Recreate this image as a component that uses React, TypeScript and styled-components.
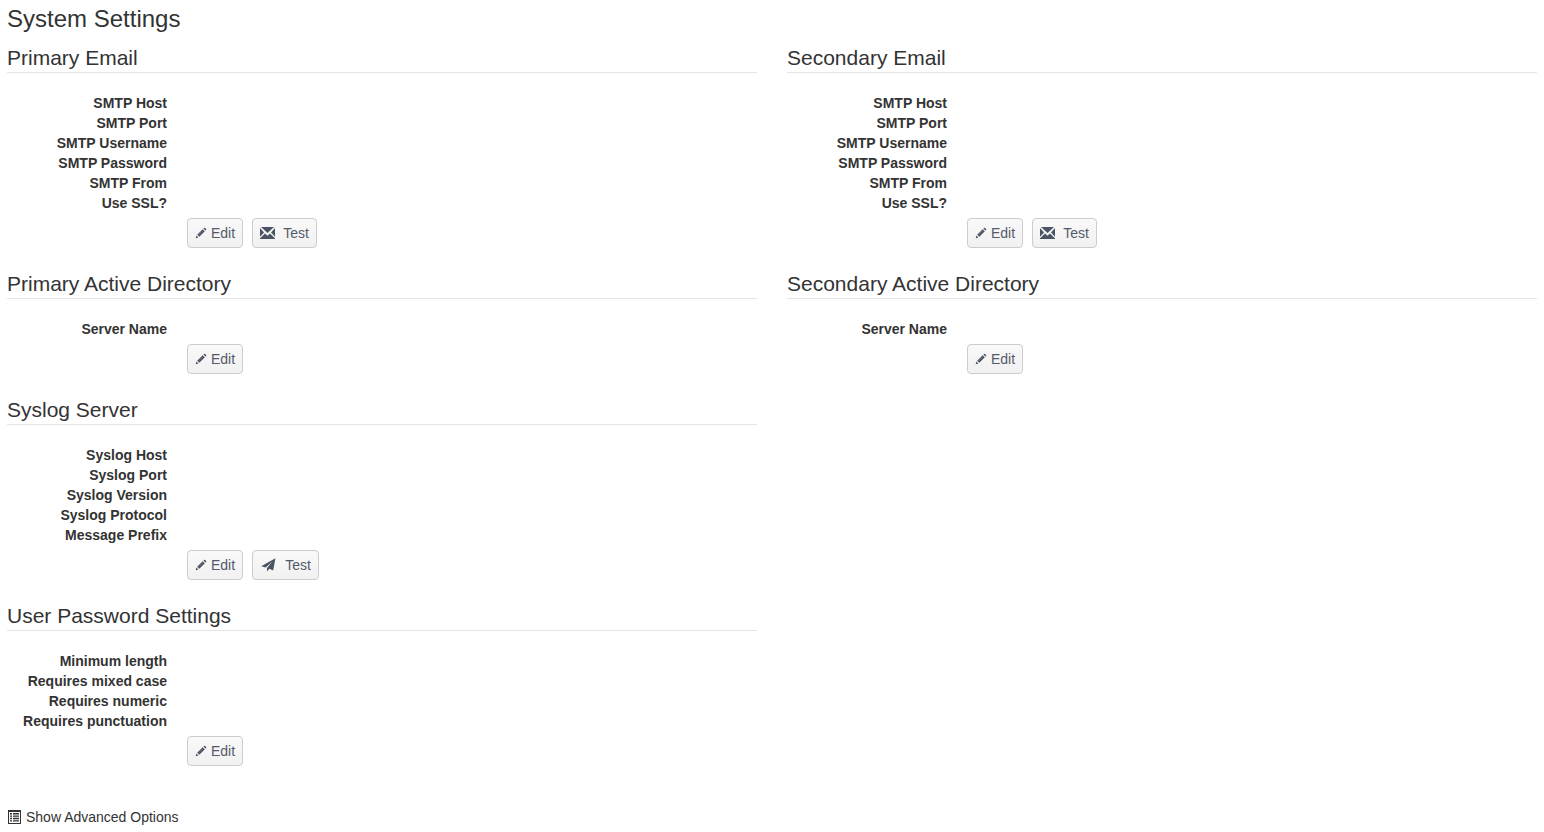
import React from "react";
import styled, { createGlobalStyle } from "styled-components";

const GlobalStyle = createGlobalStyle`
  *, *::before, *::after { box-sizing: border-box; }
  body {
    margin: 0;
    background: #fff;
    color: #333;
    font: 14px/20px "Liberation Sans", Arial, sans-serif;
  }
`;

const Page = styled.main`
  padding: 4px 7px;
`;

const PageTitle = styled.h1`
  margin: 0;
  font-size: 24px;
  font-weight: 400;
  line-height: 30px;
`;

const Grid = styled.div`
  display: grid;
  grid-template-columns: 1fr 1fr;
  column-gap: 30px;
  row-gap: 22px;
  padding-top: 10px;
`;

const Panel = styled.section`
  grid-column-start: 1;

  &:nth-child(2),
  &:nth-child(4) {
    grid-column-start: 2;
  }
`;

const PanelTitle = styled.h2`
  margin: 0 0 20px;
  border-bottom: 1px solid #e5e5e5;
  font-size: 21px;
  font-weight: 400;
  line-height: 28px;
`;

const Fields = styled.dl`
  display: grid;
  grid-template-columns: 160px 1fr;
  column-gap: 20px;
  margin: 0;
`;

const FieldName = styled.dt`
  font-weight: 700;
  text-align: right;
  white-space: nowrap;
`;

const FieldValue = styled.dd`
  margin: 0;
`;

const Actions = styled.div`
  display: flex;
  gap: 9px;
  padding: 5px 0 0 180px;
`;

const Button = styled.button<{ $gap: number }>`
  display: flex;
  align-items: center;
  gap: ${(p) => p.$gap}px;
  height: 30px;
  padding: 0 7px;
  border: 1px solid #ccc;
  border-radius: 4px;
  background: linear-gradient(#f9f9f9, #f1f1f1);
  color: #555a6b;
  font: inherit;
  cursor: pointer;
`;

const AdvancedLink = styled.a`
  display: inline-flex;
  align-items: center;
  gap: 4px;
  margin-top: 41px;
  color: #333;
  text-decoration: none;
`;

const PencilIcon = () => (
  <svg width="12" height="12" viewBox="0 0 12 12" fill="#4a5060" aria-hidden="true">
    <path d="M9 .9a.8.8 0 0 1 1.1 0l1 1a.8.8 0 0 1 0 1.1l-.6.6-2.1-2.1zM7.7 2.2 9.8 4.3 4.3 9.8 2.2 7.7zM1.4 8.6l2 2-2.7.7z" />
    <path d="M3.4 8.2 8.2 3.4" stroke="#8d929d" strokeWidth=".5" />
  </svg>
);

const EnvelopeIcon = () => (
  <svg width="15" height="12" viewBox="0 0 15 12" fill="#4a5465" aria-hidden="true">
    <path d="M1 0h13L7.5 6zM0 1l4 4.5-4 4.3zM15 1l-4 4.5 4 4.3zM5 6.6l2.5 2.1L10 6.6l4.6 4.4H15v1H0v-1h.4z" />
  </svg>
);

const PlaneIcon = () => (
  <svg width="17" height="14" viewBox="0 0 17 14" fill="#4a5465" aria-hidden="true">
    <path d="M15.4.3 1.2 8.3l4.4 1.3L12.4 3.6 7 10v3.6l2.3-2.8 3.9 1.6z" />
  </svg>
);

const ListIcon = () => (
  <svg width="15" height="14" viewBox="0 0 15 14" fill="#333" aria-hidden="true">
    <path
      fillRule="evenodd"
      d="M1 0h13v14H1zM2 2v11h11V2z"
    />
    <path d="M3 3h2v1.4H3zM6 3h6v1.4H6zM3 5.4h2v1.4H3zM6 5.4h6v1.4H6zM3 7.8h2v1.4H3zM6 7.8h6v1.4H6zM3 10.2h2v1.4H3zM6 10.2h6v1.4H6z" />
  </svg>
);

type PanelData = { title: string; fields: string[]; test?: "mail" | "syslog" };

const emailFields = ["SMTP Host", "SMTP Port", "SMTP Username", "SMTP Password", "SMTP From", "Use SSL?"];

const panels: PanelData[] = [
  { title: "Primary Email", fields: emailFields, test: "mail" },
  { title: "Secondary Email", fields: emailFields, test: "mail" },
  { title: "Primary Active Directory", fields: ["Server Name"] },
  { title: "Secondary Active Directory", fields: ["Server Name"] },
  {
    title: "Syslog Server",
    fields: ["Syslog Host", "Syslog Port", "Syslog Version", "Syslog Protocol", "Message Prefix"],
    test: "syslog",
  },
  {
    title: "User Password Settings",
    fields: ["Minimum length", "Requires mixed case", "Requires numeric", "Requires punctuation"],
  },
];

export default function App() {
  return (
    <>
      <GlobalStyle />
      <Page>
        <PageTitle>System Settings</PageTitle>
        <Grid>
          {panels.map((panel) => (
            <Panel key={panel.title}>
              <PanelTitle>{panel.title}</PanelTitle>
              <Fields>
                {panel.fields.map((name) => (
                  <React.Fragment key={name}>
                    <FieldName>{name}</FieldName>
                    <FieldValue />
                  </React.Fragment>
                ))}
              </Fields>
              <Actions>
                <Button type="button" $gap={4}>
                  <PencilIcon />
                  Edit
                </Button>
                {panel.test && (
                  <Button type="button" $gap={8}>
                    {panel.test === "mail" ? <EnvelopeIcon /> : <PlaneIcon />}
                    Test
                  </Button>
                )}
              </Actions>
            </Panel>
          ))}
        </Grid>
        <AdvancedLink href="#advanced">
          <ListIcon />
          Show Advanced Options
        </AdvancedLink>
      </Page>
    </>
  );
}
